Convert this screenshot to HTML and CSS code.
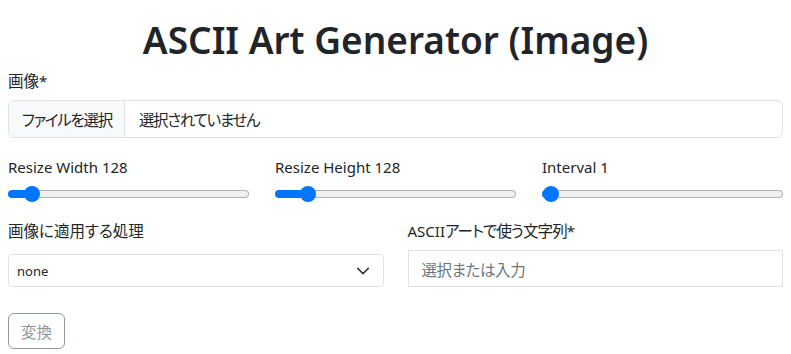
FILE: index.html
```html
<!DOCTYPE html>
<html lang="ja">
<head>
<meta charset="utf-8">
<title>ASCII Art Generator (Image)</title>
<link rel="stylesheet" href="styles.css">
</head>
<body>
<main class="page">
  <h1 class="title">ASCII Art Generator (Image)</h1>

  <div class="field">
    <label class="label"><span class="ja">画像</span>*</label>
    <div class="file-input">
      <span class="file-btn ja tight">ファイルを選択</span>
      <span class="file-name ja tight">選択されていません</span>
    </div>
  </div>

  <div class="ranges">
    <div class="range-col">
      <label class="label">Resize Width 128</label>
      <input class="range" type="range" min="1" max="1920" value="128" style="--fill: 9.6%">
    </div>
    <div class="range-col">
      <label class="label">Resize Height 128</label>
      <input class="range" type="range" min="1" max="1200" value="128" style="--fill: 13.2%">
    </div>
    <div class="range-col">
      <label class="label">Interval 1</label>
      <input class="range" type="range" min="1" max="32" value="1" style="--fill: 3.3%">
    </div>
  </div>

  <div class="controls">
    <div class="control-col">
      <label class="label select-label ja">画像に適用する処理</label>
      <div class="select">
        <span>none</span>
        <svg class="chevron" width="14" height="14" viewBox="0 0 16 16"><path d="M2 5l6 6 6-6" fill="none" stroke="#343a40" stroke-width="1.8" stroke-linecap="round" stroke-linejoin="round"/></svg>
      </div>
    </div>
    <div class="control-col">
      <label class="label input-label">ASCII<span class="ja mid">アートで使う文字列</span>*</label>
      <input class="text-input ja" type="text" placeholder="選択または入力">
    </div>
  </div>

  <button class="btn ja" type="button" disabled>変換</button>
</main>
</body>
</html>
```

FILE: styles.css
```css
* { box-sizing: border-box; }
html, body { margin: 0; padding: 0; background: #fff; }
body {
  font-family: "Noto Sans", "Noto Sans CJK JP", sans-serif;
  font-size: 15px;
  color: #212529;
  font-feature-settings: "palt";
}
.ja {
  font-family: "Noto Sans CJK JP", sans-serif;
  font-size: 15.5px;
  font-feature-settings: "palt";
}
.tight { letter-spacing: -1.3px; }
.mid { letter-spacing: -0.9px; }
.page { padding: 16px 8px 0; }
.title {
  margin: 0;
  text-align: center;
  font-size: 37px;
  font-weight: 600;
  line-height: 48px;
}
.label {
  display: block;
  height: 24px;
  line-height: 24px;
  white-space: nowrap;
}
.field { margin-top: 4px; }
.field .label { margin-bottom: 8px; }
.file-input {
  display: flex;
  height: 38px;
  border: 1px solid #dee2e6;
  border-radius: 6px;
  overflow: hidden;
}
.file-btn {
  display: flex;
  align-items: center;
  padding: 0 12px 0 13px;
  background: #f8f9fa;
  border-right: 1px solid #dee2e6;
}
.file-name {
  display: flex;
  align-items: center;
  padding: 0 14px;
}
.ranges {
  display: grid;
  grid-template-columns: repeat(3, 1fr);
  column-gap: 26px;
  margin-top: 17px;
}
.range {
  -webkit-appearance: none;
  appearance: none;
  display: block;
  width: 100%;
  height: 16px;
  margin: 7px 0 0;
  padding: 0;
  background: transparent;
}
.range::-webkit-slider-runnable-track {
  height: 8px;
  border: 1px solid transparent;
  border-radius: 4px;
  background:
    linear-gradient(to right, #0075ff var(--fill), transparent var(--fill)) border-box,
    linear-gradient(#efefef, #efefef) padding-box,
    linear-gradient(#b2b2b2, #b2b2b2) border-box;
}
.range::-webkit-slider-thumb {
  -webkit-appearance: none;
  appearance: none;
  width: 16px;
  height: 16px;
  margin-top: -5px;
  border: none;
  border-radius: 50%;
  background: #0075ff;
}
.controls {
  display: grid;
  grid-template-columns: 1fr 1fr;
  column-gap: 24px;
  align-items: start;
  margin-top: 16px;
}
.select-label { margin-bottom: 12px; }
.input-label { margin-bottom: 8px; }
.select {
  display: flex;
  align-items: center;
  justify-content: space-between;
  height: 33px;
  padding: 0 13px 0 8px;
  border: 1px solid #dee2e6;
  border-radius: 4px;
  font-size: 13px;
}
.chevron { display: block; }
.text-input {
  display: block;
  width: 100%;
  height: 37px;
  margin: 0;
  padding: 0 13px;
  border: 1px solid #dee2e6;
  border-radius: 0;
  color: #212529;
  outline: none;
  letter-spacing: -0.4px;
}
.text-input::placeholder { color: #6c757d; }
.btn {
  display: block;
  margin-top: 26px;
  height: 36px;
  padding: 0 12px;
  border: 1px solid #6c757d;
  border-radius: 6px;
  background: #fff;
  color: #6c757d;
  opacity: 0.75;
}
```
